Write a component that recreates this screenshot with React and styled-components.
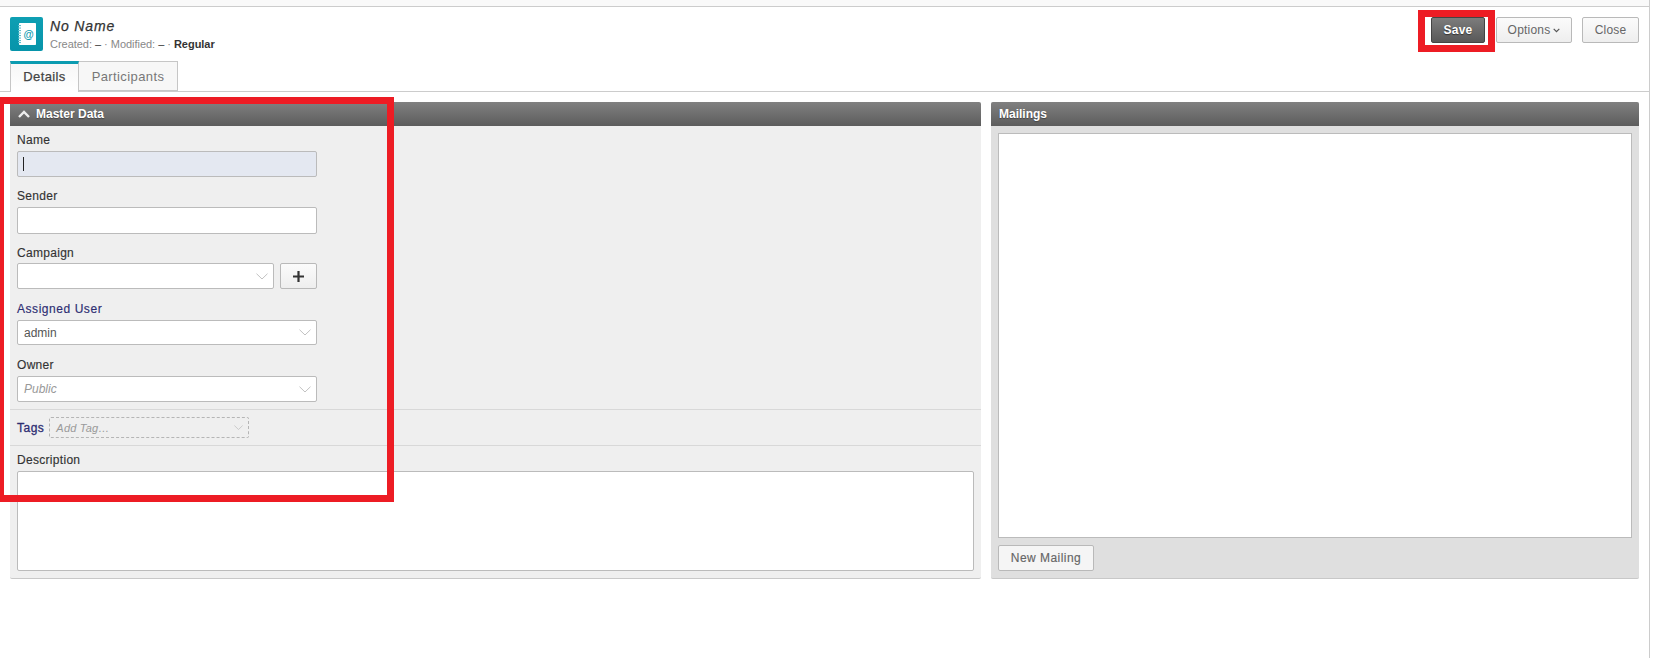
import React from "react";
import styled, { createGlobalStyle } from "styled-components";

const Global = createGlobalStyle`
  html, body { margin: 0; padding: 0; background: #fff; }
  body { font-family: "Liberation Sans", Arial, sans-serif; font-size: 12px; color: #333; }
  * { box-sizing: border-box; }
`;

const Page = styled.div`
  position: relative;
  width: 1650px;
  height: 658px;
  border-right: 1px solid #ccc;
`;
const TopStrip = styled.div`
  height: 7px;
  background: #f9f9f9;
  border-bottom: 1px solid #ccc;
`;
const Header = styled.header`
  display: flex;
  justify-content: space-between;
  padding: 10px 10px 0;
  height: 54px;
`;
const TitleBlock = styled.div`
  display: flex;
  gap: 7px;
`;
const AppIcon = styled.div`
  width: 33px;
  height: 34px;
  border-radius: 2px;
  background: linear-gradient(#0e9fb3, #0794aa);
  display: flex;
  align-items: center;
  justify-content: center;
`;
const TitleText = styled.div`
  display: flex;
  flex-direction: column;
`;
const Title = styled.div`
  font-size: 14px;
  line-height: 18px;
  font-style: italic;
  color: #333;
  letter-spacing: 0.85px;
  -webkit-text-stroke: 0.25px #333;
`;
const Meta = styled.div`
  font-size: 11px;
  line-height: 19px;
  color: #888;
  letter-spacing: -0.03px;
  white-space: pre;
`;
const MetaStrong = styled.span`
  color: #333;
  font-weight: ${(p) => (p.$bold ? 700 : 400)};
`;
const Actions = styled.div`
  display: flex;
  height: 26px;
`;
const Button = styled.button`
  height: ${(p) => p.$h || 26}px;
  width: ${(p) => p.$w}px;
  flex: none;
  margin-left: ${(p) => p.$ml || 0}px;
  padding: 0;
  border: 1px solid #b9b9b9;
  border-radius: 2px;
  background: linear-gradient(#fbfbfb, #eeeeee);
  color: #666;
  font: 12px "Liberation Sans", Arial, sans-serif;
  letter-spacing: 0.2px;
  display: inline-flex;
  align-items: center;
  justify-content: center;
  gap: 3px;
`;
const SaveButton = styled(Button)`
  background: linear-gradient(#7c7c7c, #585858);
  border-color: #444;
  color: #fff;
  font-weight: 700;
  text-shadow: 0 1px 1px #333;
`;
const NewButton = styled(Button)`
  background: #f5f5f5;
  letter-spacing: 0.45px;
  -webkit-text-stroke: 0.15px #666;
`;
const Tabs = styled.nav`
  display: flex;
  height: 31px;
  padding-left: 10px;
  border-bottom: 1px solid #ccc;
`;
const Tab = styled.div`
  height: ${(p) => (p.$active ? 31 : 30)}px;
  width: ${(p) => p.$w}px;
  display: flex;
  align-items: center;
  justify-content: center;
  padding-bottom: ${(p) => (p.$active ? 3 : 0)}px;
  font-size: 13px;
  letter-spacing: 0.4px;
  color: ${(p) => (p.$active ? "#444" : "#777")};
  background: ${(p) => (p.$active ? "linear-gradient(#f7f7f7, #fff)" : "#f7f7f7")};
  border: 1px solid #c6c6c6;
  border-left-width: ${(p) => (p.$active ? 1 : 0)}px;
  border-bottom-width: ${(p) => (p.$active ? 0 : 1)}px;
  border-top: ${(p) => (p.$active ? "3px solid #0b9bb0" : "1px solid #c6c6c6")};
  -webkit-text-stroke: ${(p) => (p.$active ? "0.25px #444" : "0")};
`;
const Columns = styled.main`
  display: grid;
  grid-template-columns: 971px 648px;
  gap: 10px;
  padding: 10px 10px 0;
`;
const Panel = styled.section`
  height: 477px;
  display: flex;
  flex-direction: column;
  border-radius: 2px;
  background: ${(p) => p.$bg};
  border-bottom: 1px solid #c8c8c8;
`;
const PanelHead = styled.div`
  height: 24px;
  flex: none;
  display: flex;
  align-items: center;
  gap: 6px;
  padding-left: ${(p) => p.$pl}px;
  border-radius: 2px 2px 0 0;
  background: linear-gradient(#808080, #5c5c5c);
  color: #fff;
  font-size: 12px;
  font-weight: 700;
  text-shadow: 0 1px 1px #444;
`;
const Form = styled.div`
  padding: 7px 7px 0;
  width: 314px;
`;
const Field = styled.div`
  margin-bottom: ${(p) => p.$mb ?? 12}px;
`;
const Label = styled.div`
  height: 14px;
  line-height: 14px;
  margin-bottom: ${(p) => p.$gap ?? 4}px;
  font-size: 12px;
  letter-spacing: ${(p) => (p.$blue ? 0.55 : 0.3)}px;
  color: ${(p) => (p.$blue ? "#2d2d72" : "#333")};
  -webkit-text-stroke: 0.15px ${(p) => (p.$blue ? "#2d2d72" : "#333")};
`;
const Input = styled.div`
  height: ${(p) => p.$h || 26}px;
  width: 300px;
  border: 1px solid #bbb;
  border-radius: 2px;
  background: ${(p) => (p.$focus ? "#e4e8f1" : "#fff")};
  display: flex;
  align-items: center;
  padding-left: 5px;
`;
const Caret = styled.span`
  width: 1px;
  height: 14px;
  background: #222;
`;
const SelectBox = styled.div`
  height: ${(p) => p.$h || 25}px;
  width: ${(p) => p.$w || 300}px;
  flex: none;
  border: 1px solid #bbb;
  border-radius: 2px;
  background: #fff;
  display: flex;
  align-items: center;
  justify-content: space-between;
  padding: 0 5px 0 6px;
  font-size: 12px;
  color: ${(p) => (p.$placeholder ? "#999" : "#555")};
  font-style: ${(p) => (p.$placeholder ? "italic" : "normal")};
`;
const Inline = styled.div`
  display: flex;
  gap: 6px;
`;
const Divider = styled.div`
  height: 37px;
  border-top: 1px solid #d8d8d8;
  border-bottom: 1px solid #d8d8d8;
  display: flex;
  align-items: center;
  gap: 5px;
  padding-left: 7px;
  margin-top: -4px;
`;
const TagLabel = styled.span`
  color: #2d2d72;
  font-size: 12px;
  letter-spacing: 0.5px;
  -webkit-text-stroke: 0.3px #2d2d72;
`;
const TagBox = styled.div`
  width: 200px;
  height: 21px;
  border: 1px dashed #b5b5b5;
  border-radius: 2px;
  display: flex;
  align-items: center;
  justify-content: space-between;
  padding: 0 5px 0 6px;
  font-size: 11px;
  font-style: italic;
  letter-spacing: 0.2px;
  color: #999;
`;
const DescWrap = styled.div`
  padding: 7px 7px 0;
`;
const TextArea = styled.div`
  height: 100px;
  width: 957px;
  border: 1px solid #bbb;
  border-radius: 2px;
  background: #fff;
`;
const MailBody = styled.div`
  padding: 7px 7px 0;
`;
const MailBox = styled.div`
  height: 405px;
  border: 1px solid #bbb;
  background: #fff;
  margin-bottom: 7px;
`;
const RedFrame = styled.div`
  position: absolute;
  left: ${(p) => p.$x}px;
  top: ${(p) => p.$y}px;
  width: ${(p) => p.$w}px;
  height: ${(p) => p.$h}px;
  border: 7px solid #ed1c24;
  pointer-events: none;
`;

const Chevron = ({ s = 12 }) => (
  <svg width={s} height={s * 0.55} viewBox="0 0 12 6.6" fill="none" stroke="#bbb" strokeWidth="0.9">
    <path d="M.5 .7 6 6 11.5 .7" />
  </svg>
);

const NotebookIcon = () => (
  <svg width="18" height="22" viewBox="0 0 18 22">
    <rect x="1" y="0" width="17" height="22" rx="0.8" fill="#fff" />
    <g fill="#5fbfce">
      {[2, 4.5, 7, 9.5, 12, 14.5, 17, 19].map((y) => (
        <rect key={y} x="0" y={y} width="3" height="1.1" />
      ))}
    </g>
    <text x="10.5" y="15" textAnchor="middle" fontSize="10.5" fontWeight="700" fontFamily="Liberation Sans, sans-serif" fill="#0b9bb0">@</text>
  </svg>
);

export default function App() {
  return (
    <Page>
      <Global />
      <TopStrip />
      <Header>
        <TitleBlock>
          <AppIcon><NotebookIcon /></AppIcon>
          <TitleText>
            <Title>No Name</Title>
            <Meta>Created: <MetaStrong>–</MetaStrong> · Modified: <MetaStrong>–</MetaStrong> · <MetaStrong $bold>Regular</MetaStrong></Meta>
          </TitleText>
        </TitleBlock>
        <Actions>
          <SaveButton $w={54}>Save</SaveButton>
          <Button $w={76} $ml={11}>
            Options
            <svg width="7" height="5" viewBox="0 0 7 5" fill="none" stroke="#555" strokeWidth="1.2"><path d="M.7 .8 3.5 3.6 6.3 .8" /></svg>
          </Button>
          <Button $w={57} $ml={10}>Close</Button>
        </Actions>
      </Header>
      <Tabs>
        <Tab $active $w={69}>Details</Tab>
        <Tab $w={99}>Participants</Tab>
      </Tabs>
      <Columns>
        <Panel $bg="#efefef">
          <PanelHead $pl={8}>
            <svg width="12" height="8" viewBox="0 0 12 8" fill="none" stroke="#eee" strokeWidth="2.4"><path d="M1 7 6 2 11 7" /></svg>
            Master Data
          </PanelHead>
          <Form>
            <Field>
              <Label>Name</Label>
              <Input $focus><Caret /></Input>
            </Field>
            <Field>
              <Label>Sender</Label>
              <Input $h={27} />
            </Field>
            <Field $mb={13}>
              <Label $gap={3}>Campaign</Label>
              <Inline>
                <SelectBox $w={257} $h={26}><span /><Chevron /></SelectBox>
                <Button $w={37} $h={26}>
                  <svg width="11" height="11" viewBox="0 0 11 11" fill="none" stroke="#333" strokeWidth="2.2"><path d="M5.5 0V11M0 5.5H11" /></svg>
                </Button>
              </Inline>
            </Field>
            <Field $mb={13}>
              <Label $blue>Assigned User</Label>
              <SelectBox>admin<Chevron /></SelectBox>
            </Field>
            <Field $mb={11}>
              <Label>Owner</Label>
              <SelectBox $placeholder $h={26}>Public<Chevron /></SelectBox>
            </Field>
          </Form>
          <Divider>
            <TagLabel>Tags</TagLabel>
            <TagBox>Add Tag…<Chevron s={9} /></TagBox>
          </Divider>
          <DescWrap>
            <Label>Description</Label>
            <TextArea />
          </DescWrap>
        </Panel>
        <Panel $bg="#dfdfdf">
          <PanelHead $pl={8}>Mailings</PanelHead>
          <MailBody>
            <MailBox />
            <NewButton $w={96}>New Mailing</NewButton>
          </MailBody>
        </Panel>
      </Columns>
      <RedFrame $x={-3} $y={97} $w={397} $h={405} />
      <RedFrame $x={1418} $y={10} $w={77} $h={42} />
    </Page>
  );
}
